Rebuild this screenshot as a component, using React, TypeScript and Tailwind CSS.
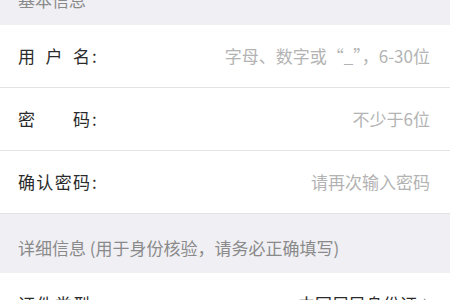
// 注册表单（基本信息 + 详细信息）的静态还原。

const font = { fontFamily: '"Noto Sans CJK SC", "Noto Sans", sans-serif' };

function SectionHeader({ title, className = "" }: { title: string; className?: string }) {
  return (
    <div className={`flex h-[59px] items-end bg-[#efeff4] px-[18px] pb-[14px] ${className}`}>
      <span className="text-[17px] leading-[22px] text-[#8a8a8a]">{title}</span>
    </div>
  );
}

function Label({ chars }: { chars: string[] }) {
  return (
    <div className="flex shrink-0 items-center">
      <span className="flex w-[72px] justify-between">
        {chars.map((c, i) => (
          <span key={i}>{c}</span>
        ))}
      </span>
      <span className="ml-[2px]">:</span>
    </div>
  );
}

function Row({
  chars,
  placeholder,
  value,
  chevron,
}: {
  chars: string[];
  placeholder?: string;
  value?: string;
  chevron?: boolean;
}) {
  return (
    <div className="flex h-[63px] items-center border-b border-[#e3e3e3] bg-white pl-[18px] pr-[20px] text-[17px] leading-[22px] text-[#2b2b2b]">
      <Label chars={chars} />
      <div className="flex flex-1 items-center justify-end">
        {placeholder && <span className="text-[#b3b3b3]">{placeholder}</span>}
        {value && <span className="text-[#2b2b2b]">{value}</span>}
        {chevron && (
          <svg className="ml-[6px] h-[12px] w-[7px]" viewBox="0 0 7 12" fill="none">
            <path d="M1 1l5 5-5 5" stroke="#9a9a9a" strokeWidth="1.3" />
          </svg>
        )}
      </div>
    </div>
  );
}

export default function App() {
  return (
    <div className="h-[300px] w-[450px] overflow-hidden bg-white" style={font}>
      <SectionHeader title="基本信息" className="-mt-[34px]" />
      <Row chars={["用", "户", "名"]} placeholder="字母、数字或“_”，6-30位" />
      <Row chars={["密", "码"]} placeholder="不少于6位" />
      <Row chars={["确", "认", "密", "码"]} placeholder="请再次输入密码" />
      <SectionHeader title="详细信息 (用于身份核验，请务必正确填写)" />
      <Row chars={["证", "件", "类", "型"]} value="中国居民身份证" chevron />
    </div>
  );
}
